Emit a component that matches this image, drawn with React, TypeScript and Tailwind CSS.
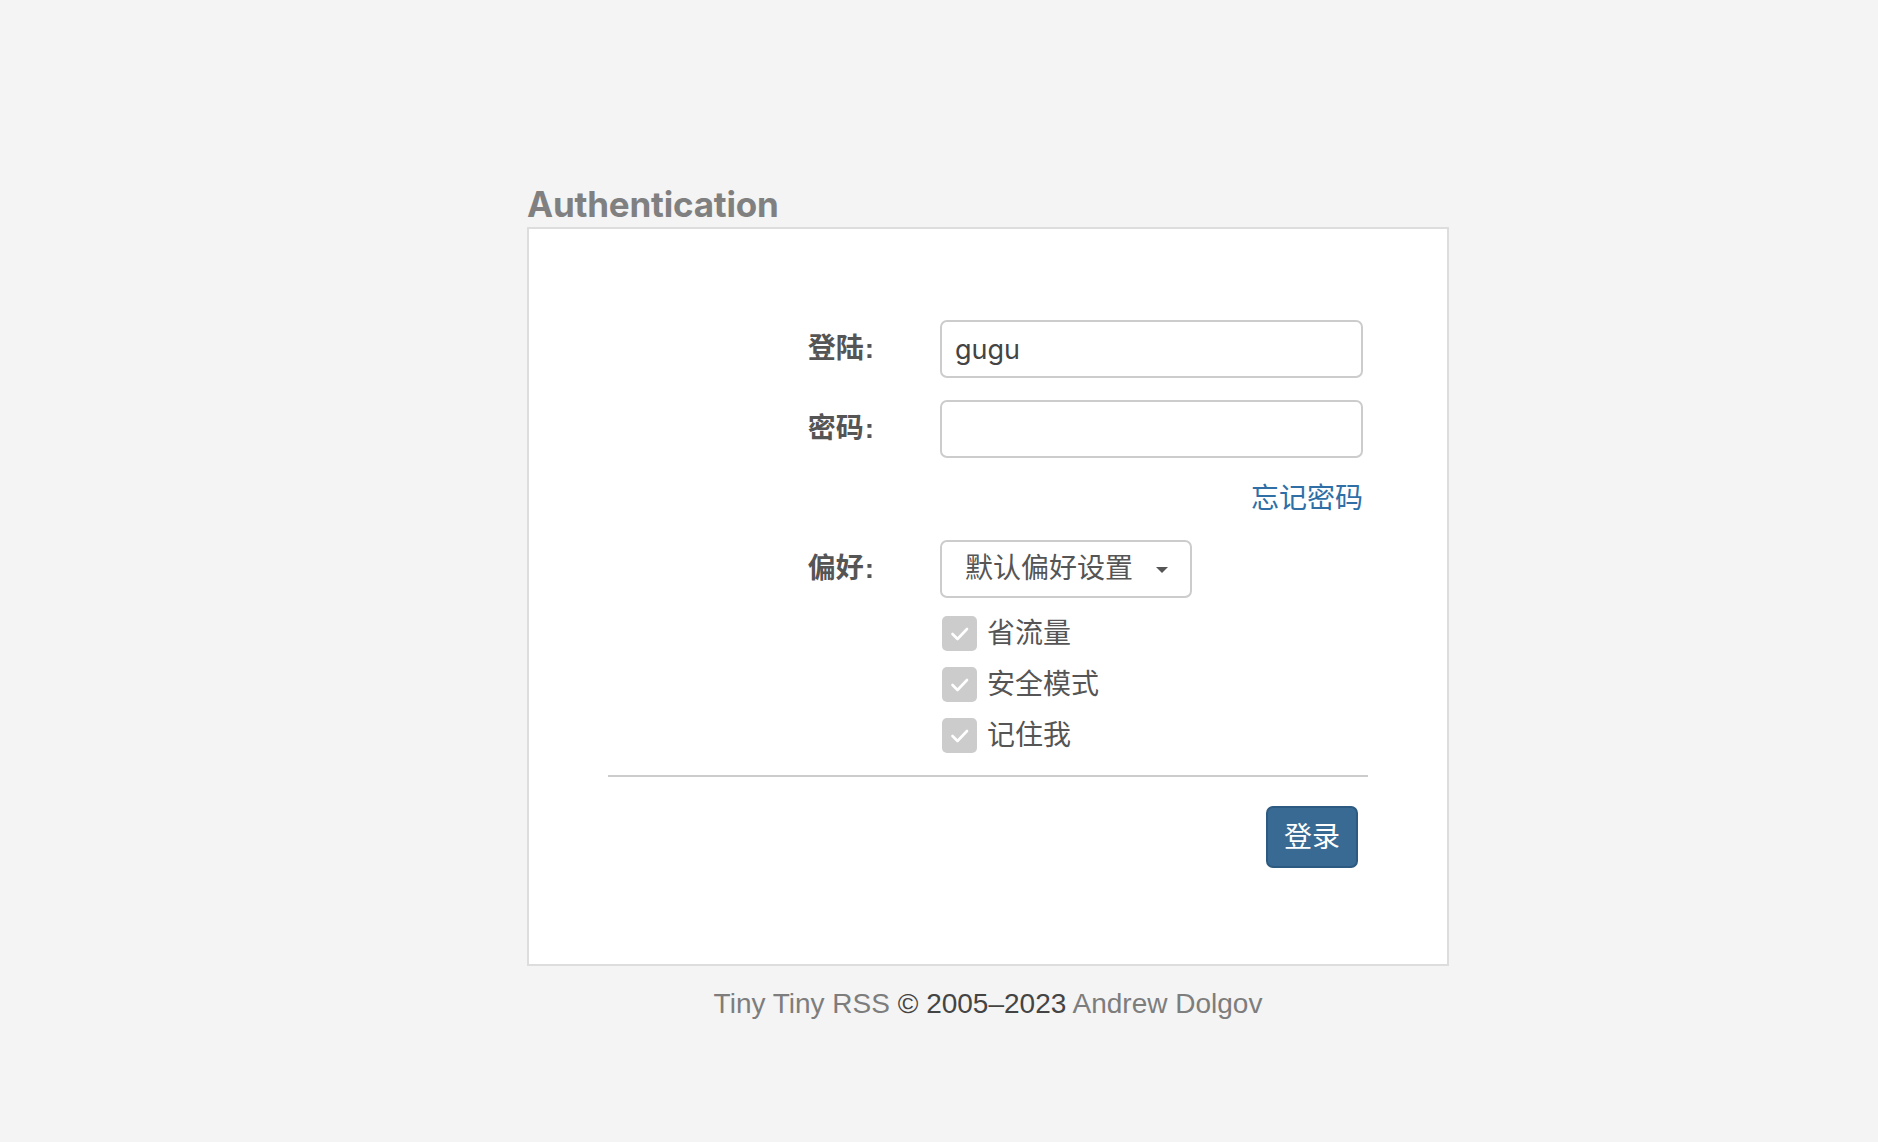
import { useState } from 'react';

function Check({ label }: { label: string }) {
  return (
    <label className="flex items-center h-[35px] gap-[10px] ml-[2px]">
      <span className="w-[35px] h-[35px] rounded-[5px] bg-[#cccccc] flex items-center justify-center shrink-0">
        <svg width="35" height="35" viewBox="0 0 35 35" fill="none">
          <path d="M10.5 18l5 5 9.5-10" stroke="#ffffff" strokeWidth="2.6" strokeLinecap="round" strokeLinejoin="round" />
        </svg>
      </span>
      <span className="text-[28px] leading-[36px] text-[#555555]">{label}</span>
    </label>
  );
}

function Row({ label, children }: { label?: string; children: React.ReactNode }) {
  return (
    <div className="flex items-center">
      <div className="w-[266px] shrink-0 text-right font-bold text-[28px] leading-[36px] text-[#555555]">
        {label && (
          <>
            {label}
            <span className="ml-[1px]">:</span>
          </>
        )}
      </div>
      <div className="ml-[66px] w-[423px]">{children}</div>
    </div>
  );
}

export default function App() {
  const [login, setLogin] = useState('gugu');

  return (
    <div className="min-h-screen bg-[#f4f4f4] font-['Liberation_Sans','Noto_Sans_CJK_SC',sans-serif]">
      <div className="pl-[527px] pt-[186px]">
        <div className="w-[922px]">
          <h1 className="font-['Inter','Liberation_Sans',sans-serif] font-bold text-[35px] leading-[36px] text-[#808080] tracking-[-0.2px] mb-[5px]">
            Authentication
          </h1>

          <div className="bg-white border-2 border-[#dddddd] px-[79px] pt-[91px] pb-[96px]">
            <div className="flex flex-col">
              <Row label="登陆">
                <input
                  value={login}
                  onChange={(e) => setLogin(e.target.value)}
                  className="w-full h-[58px] border-2 border-[#cccccc] rounded-[7px] px-[13px] text-[27px] text-[#444444] font-['Inter','Noto_Sans_CJK_SC',sans-serif] outline-none"
                />
              </Row>
              <div className="mt-[22px]">
                <Row label="密码">
                  <input type="password" className="w-full h-[58px] border-2 border-[#cccccc] rounded-[7px] px-[13px] text-[28px] outline-none" />
                </Row>
              </div>
              <div className="mt-[23px]">
                <Row>
                  <div className="text-right">
                    <a href="#" className="text-[28px] leading-[36px] text-[#2f6fa6]">忘记密码</a>
                  </div>
                </Row>
              </div>
              <div className="mt-[23px]">
                <Row label="偏好">
                  <button className="w-[252px] h-[58px] border-2 border-[#cccccc] rounded-[7px] pl-[23px] pr-[22px] flex items-center justify-between bg-white">
                    <span className="text-[28px] leading-[36px] text-[#555555]">默认偏好设置</span>
                    <svg width="12" height="6" viewBox="0 0 12 6" className="mt-[2px]">
                      <path d="M0 0h12L6 6z" fill="#555555" />
                    </svg>
                  </button>
                </Row>
              </div>
              <div className="mt-[18px]">
                <Row>
                  <div className="flex flex-col gap-[16px]">
                    <Check label="省流量" />
                    <Check label="安全模式" />
                    <Check label="记住我" />
                  </div>
                </Row>
              </div>
              <div className="mt-[22px] h-[2px] bg-[#cccccc]" />
              <div className="mt-[29px] flex justify-end pr-[10px]">
                <button className="w-[92px] h-[62px] rounded-[7px] bg-[#386a94] border-2 border-[#2c5a80] text-white text-[28px] leading-[36px] pt-[2px]">
                  登录
                </button>
              </div>
            </div>
          </div>

          <footer className="mt-[20px] text-center text-[28px] leading-[36px] text-[#444444]">
            <a href="#" className="text-[#7d7d7d]">Tiny Tiny RSS</a> © 2005–2023{' '}
            <a href="#" className="text-[#7d7d7d]">Andrew Dolgov</a>
          </footer>
        </div>
      </div>
    </div>
  );
}
